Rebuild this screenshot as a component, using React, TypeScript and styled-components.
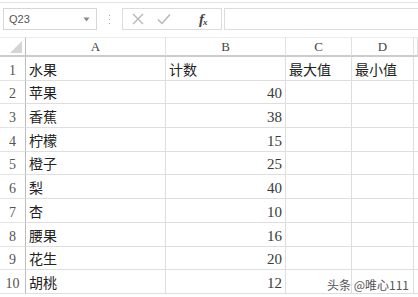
import React from 'react';
import styled, {createGlobalStyle} from 'styled-components';

const GlobalStyle = createGlobalStyle`
  html, body {
    margin: 0;
    padding: 0;
    background: #ffffff;
    overflow: hidden;
  }
`;

const Page = styled.div`
  position: relative;
  width: 418px;
  height: 297px;
  overflow: hidden;
  background: #ffffff;
  border-top: 1px solid #e3e3e3;
  margin-top: 2px;
  box-sizing: border-box;
  font-family: 'Liberation Serif', serif;
`;

const FormulaBar = styled.div`
  display: flex;
  align-items: center;
  height: 22px;
  margin-top: 5px;
  padding-left: 3px;
`;

const NameBox = styled.div`
  display: flex;
  align-items: center;
  justify-content: space-between;
  width: 94px;
  height: 22px;
  box-sizing: border-box;
  border: 1px solid #d6d6d6;
  padding: 0 6px 0 5px;
  font-family: 'Liberation Sans', sans-serif;
  font-size: 11px;
  color: #555555;
`;

const Grip = styled.div`
  width: 25px;
  display: flex;
  justify-content: center;
`;

const ButtonGroup = styled.div`
  display: flex;
  align-items: center;
  width: 100px;
  height: 22px;
  box-sizing: border-box;
  border: 1px solid #dcdcdc;
  padding-left: 9px;
  gap: 13px;
`;

const FxLabel = styled.span`
  margin-left: 15px;
  font-family: 'Liberation Serif', serif;
  font-style: italic;
  font-weight: bold;
  font-size: 15px;
  color: #444444;
  letter-spacing: -1px;

  sub {
    font-size: 9px;
    vertical-align: -1px;
  }
`;

const FormulaInput = styled.div`
  flex: 1;
  height: 22px;
  box-sizing: border-box;
  border: 1px solid #dcdcdc;
  border-right: none;
  margin-left: 2px;
`;

const Sheet = styled.div`
  display: grid;
  grid-template-columns: 26px 140px 120px 66px 62px 4px;
  grid-template-rows: 20px;
  grid-auto-rows: 23.7px;
  margin-top: 7px;
`;

const Cell = styled.div<{$align?: 'left' | 'right'}>`
  box-sizing: border-box;
  border-right: 1px solid #dedede;
  border-bottom: 1px solid #dedede;
  display: flex;
  align-items: flex-end;
  justify-content: ${p => (p.$align === 'right' ? 'flex-end' : 'flex-start')};
  padding: 0 3px 2px 3px;
  font-family: 'Noto Sans CJK SC', sans-serif;
  font-size: 14px;
  line-height: 18px;
  color: #222222;
  overflow: hidden;
  white-space: nowrap;
`;

const NumberCell = styled(Cell)`
  font-family: 'Liberation Serif', serif;
  font-size: 15px;
  color: #3a3a3a;
  padding-bottom: 1px;
`;

const ColumnHeader = styled.div`
  box-sizing: border-box;
  border-right: 1px solid #e0e0e0;
  border-bottom: 2px solid #cccccc;
  border-top: 1px solid #ececec;
  display: flex;
  align-items: center;
  justify-content: center;
  font-family: 'Liberation Serif', serif;
  font-size: 13px;
  color: #444444;
`;

const Corner = styled(ColumnHeader)`
  justify-content: flex-end;
  align-items: flex-end;
  padding: 0 3px 2px 0;
  border-right: 1px solid #bdbdbd;
`;

const RowHeader = styled.div`
  box-sizing: border-box;
  border-right: 1px solid #bdbdbd;
  border-bottom: 1px solid #e3e3e3;
  display: flex;
  align-items: flex-end;
  justify-content: center;
  padding-bottom: 1px;
  font-family: 'Liberation Serif', serif;
  font-size: 14px;
  color: #555555;
`;

const Watermark = styled.div`
  position: absolute;
  right: 9px;
  bottom: 6px;
  font-family: 'Noto Sans CJK SC', sans-serif;
  font-size: 12px;
  color: #555555;
  text-shadow: 0 0 2px #ffffff, 0 0 2px #ffffff;
`;

const columns = ['A', 'B', 'C', 'D'];

const rows: Array<{fruit: string; count?: number}> = [
  {fruit: '苹果', count: 40},
  {fruit: '香蕉', count: 38},
  {fruit: '柠檬', count: 15},
  {fruit: '橙子', count: 25},
  {fruit: '梨', count: 40},
  {fruit: '杏', count: 10},
  {fruit: '腰果', count: 16},
  {fruit: '花生', count: 20},
  {fruit: '胡桃', count: 12},
];

function Dropdown() {
  return (
    <svg width="7" height="5" viewBox="0 0 7 5">
      <path d="M0.5 0.5 L6.5 0.5 L3.5 4.5 Z" fill="#8a8a8a" />
    </svg>
  );
}

function GripDots() {
  return (
    <svg width="3" height="9" viewBox="0 0 3 9">
      <rect x="1" y="0" width="1" height="1" fill="#b0b0b0" />
      <rect x="1" y="4" width="1" height="1" fill="#b0b0b0" />
      <rect x="1" y="8" width="1" height="1" fill="#b0b0b0" />
    </svg>
  );
}

function CancelIcon() {
  return (
    <svg width="12" height="12" viewBox="0 0 12 12">
      <path d="M1 1 L11 11 M11 1 L1 11" stroke="#b5b5b5" strokeWidth="1.3" fill="none" />
    </svg>
  );
}

function CheckIcon() {
  return (
    <svg width="14" height="12" viewBox="0 0 14 12">
      <path d="M1 6.5 L5 10.5 L13 1.5" stroke="#b5b5b5" strokeWidth="1.4" fill="none" />
    </svg>
  );
}

function CornerTriangle() {
  return (
    <svg width="12" height="12" viewBox="0 0 12 12">
      <path d="M12 0 L12 12 L0 12 Z" fill="#d4d4d4" />
    </svg>
  );
}

export default function App() {
  return (
    <>
      <GlobalStyle />
      <Page>
        <FormulaBar>
          <NameBox>
            <span>Q23</span>
            <Dropdown />
          </NameBox>
          <Grip>
            <GripDots />
          </Grip>
          <ButtonGroup>
            <CancelIcon />
            <CheckIcon />
            <FxLabel>
              f<sub>x</sub>
            </FxLabel>
          </ButtonGroup>
          <FormulaInput />
        </FormulaBar>

        <Sheet>
          <Corner>
            <CornerTriangle />
          </Corner>
          {columns.map(c => (
            <ColumnHeader key={c}>{c}</ColumnHeader>
          ))}
          <ColumnHeader />

          <RowHeader>1</RowHeader>
          <Cell>水果</Cell>
          <Cell>计数</Cell>
          <Cell>最大值</Cell>
          <Cell>最小值</Cell>
          <Cell />

          {rows.map((r, i) => (
            <React.Fragment key={r.fruit}>
              <RowHeader>{i + 2}</RowHeader>
              <Cell>{r.fruit}</Cell>
              <NumberCell $align="right">{r.count}</NumberCell>
              <Cell />
              <Cell />
              <Cell />
            </React.Fragment>
          ))}
        </Sheet>

        <Watermark>头条 @唯心111</Watermark>
      </Page>
    </>
  );
}
